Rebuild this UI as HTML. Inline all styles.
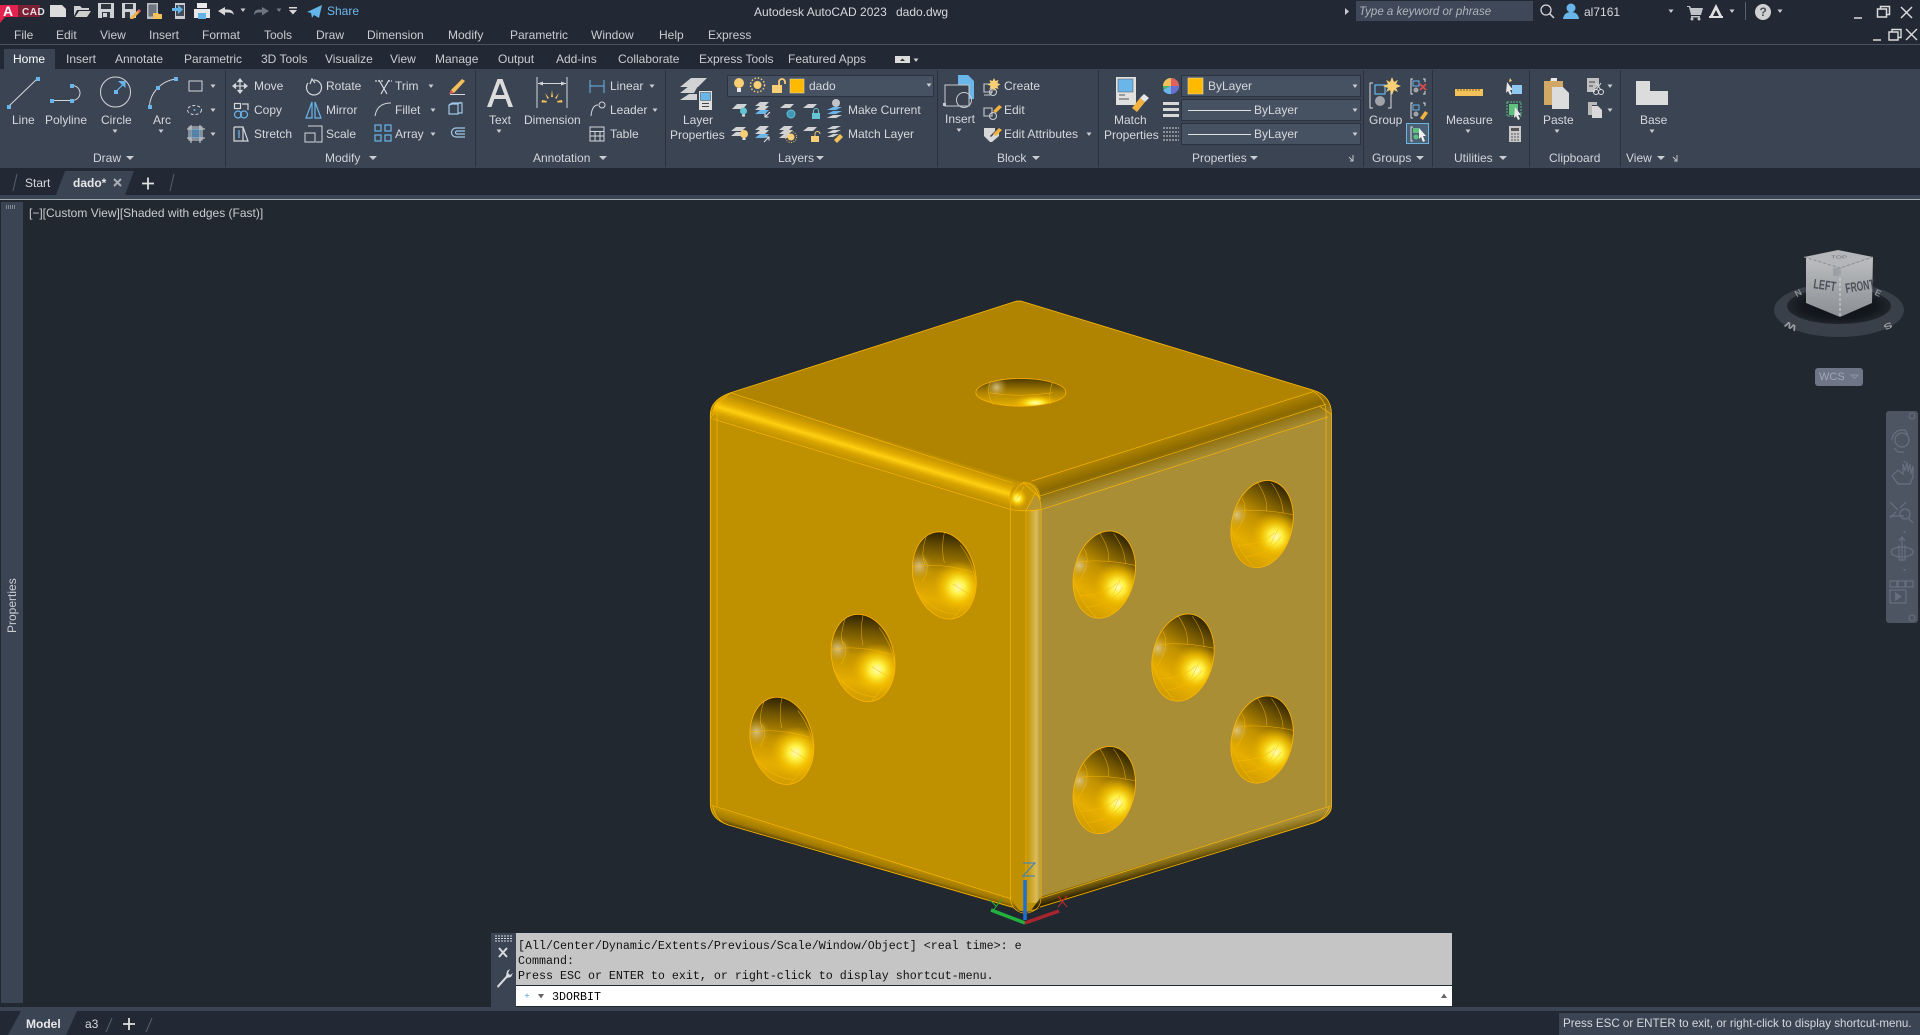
<!DOCTYPE html>
<html lang="en">
<head>
<meta charset="utf-8">
<title>Autodesk AutoCAD 2023 dado.dwg</title>
<style>
html,body{margin:0;padding:0;background:#212830}
body{position:relative;width:1920px;height:1035px;overflow:hidden;font:12px/16px "Liberation Sans",sans-serif;color:#d6d9dd}
.b{position:absolute}
.t{position:absolute;white-space:nowrap;line-height:16px;height:16px}
.m{color:#c9cdd2}
.p{color:#d2d5da}
svg.o{position:absolute;left:0;top:0}
.mono{position:absolute;font:11.67px/15px "Liberation Mono",monospace;white-space:pre;color:#111}
</style>
</head>
<body>
<!-- chrome backgrounds -->
<div class="b" style="left:0;top:0;width:1920px;height:195px;background:#222934"></div>
<div class="b" style="left:0;top:44px;width:1920px;height:1px;background:#4a525d"></div>
<div class="b" style="left:4px;top:49px;width:51px;height:20px;background:#3b4453"></div>
<div class="b" style="left:0;top:69px;width:1920px;height:99px;background:#3b4453"></div>
<div class="b" style="left:0;top:195px;width:1920px;height:4px;background:#3b4453"></div>
<div class="b" style="left:0;top:199px;width:1920px;height:1px;background:#a5abb3"></div>
<div class="b" style="left:1px;top:202px;width:22px;height:801px;background:#3b4453"></div>
<div class="b" style="left:0;top:1007px;width:1920px;height:4px;background:#3b4453"></div>
<div class="b" style="left:0;top:1011px;width:1920px;height:24px;background:#222934"></div>
<div class="b" style="left:1559px;top:1013px;width:361px;height:22px;background:#3b4453"></div>
<!-- search box -->
<div class="b" style="left:1356px;top:1px;width:177px;height:20px;background:#3f4858"></div>
<!-- ribbon dropdowns -->
<div class="b" style="left:727px;top:75px;width:207px;height:22px;background:#465162;border-radius:1px;box-shadow:inset 0 0 0 1px #2c333e"></div>
<div class="b" style="left:1181px;top:75px;width:180px;height:22px;background:#465162;box-shadow:inset 0 0 0 1px #2c333e"></div>
<div class="b" style="left:1181px;top:99px;width:180px;height:22px;background:#465162;box-shadow:inset 0 0 0 1px #2c333e"></div>
<div class="b" style="left:1181px;top:123px;width:180px;height:22px;background:#465162;box-shadow:inset 0 0 0 1px #2c333e"></div>
<div class="b" style="left:1406px;top:123px;width:23px;height:21px;background:#4a6075;box-shadow:inset 0 0 0 1px #6fb3e2"></div>
<!-- command line -->
<div class="b" style="left:491px;top:933px;width:25px;height:74px;background:#3b4453"></div>
<div class="b" style="left:516px;top:933px;width:936px;height:52px;background:#c5c5c5"></div>
<div class="b" style="left:516px;top:986px;width:936px;height:20px;background:#fff"></div>

<svg class="o" width="1920" height="1035" viewBox="0 0 1920 1035" xmlns="http://www.w3.org/2000/svg">
<defs>
<path id="tri" d="M-2.500-1.500H2.500L0 2z" fill="#c9cdd2"/>
<path id="tri2" d="M-4-2H4L0 2z" fill="#c9cdd2"/>
<linearGradient id="gTL" gradientUnits="userSpaceOnUse" x1="470" y1="375" x2="450" y2="442">
<stop offset="0" stop-color="#b48700"/><stop offset=".35" stop-color="#e0aa00"/><stop offset=".55" stop-color="#ffcf10"/><stop offset=".75" stop-color="#d8a400"/><stop offset="1" stop-color="#bf9000"/></linearGradient>
<linearGradient id="gTR" gradientUnits="userSpaceOnUse" x1="1180" y1="366" x2="1202" y2="435">
<stop offset="0" stop-color="#b08400"/><stop offset=".45" stop-color="#8c6a00"/><stop offset=".7" stop-color="#977a1c"/><stop offset="1" stop-color="#a98e36"/></linearGradient>
<linearGradient id="gBL" gradientUnits="userSpaceOnUse" x1="430" y1="1358" x2="420" y2="1392">
<stop offset="0" stop-color="#bf9000"/><stop offset=".5" stop-color="#a07800"/><stop offset="1" stop-color="#302400"/></linearGradient>
<linearGradient id="gBR" gradientUnits="userSpaceOnUse" x1="1180" y1="1358" x2="1190" y2="1395">
<stop offset="0" stop-color="#a98e36"/><stop offset=".5" stop-color="#80660f"/><stop offset="1" stop-color="#302400"/></linearGradient>
<linearGradient id="gV" gradientUnits="userSpaceOnUse" x1="785" y1="0" x2="860" y2="0">
<stop offset="0" stop-color="#bf9000"/><stop offset=".5" stop-color="#bf9000"/><stop offset=".82" stop-color="#dcbc58"/><stop offset="1" stop-color="#a98e36"/></linearGradient>
<linearGradient id="gD" x1=".62" y1="0" x2=".38" y2="1">
<stop offset="0" stop-color="#2a1f00"/><stop offset=".2" stop-color="#6e5300"/><stop offset=".48" stop-color="#c39300"/><stop offset=".78" stop-color="#e6ae00"/><stop offset="1" stop-color="#cd9b00"/></linearGradient>
<linearGradient id="gDT" x1=".5" y1="0" x2=".5" y2="1">
<stop offset="0" stop-color="#4d3a00"/><stop offset=".5" stop-color="#ad8300"/><stop offset="1" stop-color="#e8b000"/></linearGradient>
<radialGradient id="gH"><stop offset="0" stop-color="#fffcc0"/><stop offset=".28" stop-color="#fff040"/><stop offset=".6" stop-color="#f6c400" stop-opacity=".75"/><stop offset="1" stop-color="#e2aa00" stop-opacity="0"/></radialGradient>
<radialGradient id="gP"><stop offset="0" stop-color="#dcc890" stop-opacity=".9"/><stop offset="1" stop-color="#c09a30" stop-opacity="0"/></radialGradient>
<radialGradient id="gRing"><stop offset="0" stop-color="#0e1115"/><stop offset=".7" stop-color="#14181d"/><stop offset="1" stop-color="#20262d"/></radialGradient>
<linearGradient id="gCube" x1="0" y1="0" x2="0" y2="1"><stop offset="0" stop-color="#bcbec1"/><stop offset="1" stop-color="#8b8e92"/></linearGradient>
<clipPath id="cL"><ellipse rx="74" ry="105" transform="rotate(-13)"/></clipPath>
<clipPath id="cR"><ellipse rx="72" ry="105" transform="rotate(13)"/></clipPath>
<clipPath id="cT"><ellipse cx="810" cy="267" rx="107" ry="33"/></clipPath>
<g id="dL">
<ellipse rx="74" ry="105" transform="rotate(-13)" fill="url(#gD)"/>
<g clip-path="url(#cL)"><circle cx="-60" cy="-22" r="32" fill="url(#gP)"/><circle cx="33" cy="28" r="62" fill="url(#gH)"/></g>
<path d="M-42-95Q-58-50-45-25M0-102Q-8-65 0-30M-76-20Q-10-32 68-8M-50-40Q-30-25-52 15M38-72Q70-30 76 20M76 20Q50 70 20 103M-70 30Q-30 90 30 92M55 42L20 20" fill="none" stroke="#ffb800" stroke-width="1.200" opacity=".85"/>
<ellipse rx="74" ry="105" transform="rotate(-13)" fill="none" stroke="#ffb400" stroke-width="1.900"/>
</g>
<g id="dR">
<ellipse rx="72" ry="105" transform="rotate(13)" fill="url(#gD)"/>
<g clip-path="url(#cR)"><circle cx="-60" cy="-22" r="30" fill="url(#gP)"/><circle cx="32" cy="30" r="60" fill="url(#gH)"/></g>
<path d="M-48-62Q-28-30-62 20M-12-100Q15-60 10-32M22-98Q50-60 50-25M-64-30Q0-38 74-22M-74 10Q-50 75-20 100M-60 50Q0 50 30 20M-42 78Q20 70 45 30M38 12L20 48" fill="none" stroke="#ffb800" stroke-width="1.200" opacity=".85"/>
<ellipse rx="72" ry="105" transform="rotate(13)" fill="none" stroke="#ffb400" stroke-width="1.900"/>
</g>
</defs>

<!-- DICE -->
<g transform="translate(680 280) scale(.42088)">
<path d="M800 50H810L1505 262Q1548 275 1548 320V1250Q1548 1275 1505 1290L855 1492Q825 1510 790 1492L115 1295Q72 1280 72 1245V320Q72 285 120 268Z" fill="#bf9000"/>
<path d="M120 268L800 50H810L1505 262L820 482Z" fill="#b08400"/>
<path d="M120 268L820 482L785 545L78 330Q72 285 120 268Z" fill="url(#gTL)"/>
<path d="M820 482L1505 262Q1548 275 1548 325L858 545Z" fill="url(#gTR)"/>
<path d="M858 545L1548 325V1250L858 1465Z" fill="#a98e36"/>
<path d="M785 545H860V1480H785Z" fill="url(#gV)"/>
<path d="M74 1248L785 1470L805 1497L790 1492L115 1295Q80 1285 74 1248Z" fill="url(#gBL)"/>
<path d="M858 1465L1548 1250Q1545 1280 1505 1290L855 1492L835 1497Z" fill="url(#gBR)"/>
<circle cx="820" cy="515" r="36" fill="#c69600"/>
<path d="M840 510A20 30 0 0 1 858 545L822 548Z" fill="#b8962f"/>
<circle cx="802" cy="519" r="24" fill="url(#gH)"/>
<!-- wire -->
<g fill="none" stroke="#ffb800" stroke-width="1.500">
<path d="M72 1245V320Q72 285 120 268L800 50H810L1505 262Q1548 275 1548 320V1250Q1548 1275 1505 1290L855 1490M790 1490L115 1295Q72 1280 72 1245" stroke-width="1.900"/>
<path d="M120 268L790 482M78 330L785 545M835 478L1505 265M850 515L1535 295M860 545L1540 325"/>
<path d="M88 305V1250M1535 315V1250M785 545V1470M822 548V1490M858 545V1470"/>
<path d="M75 1248L785 1470M860 1468L1545 1250"/>
<path d="M785 545A38 66 0 0 1 820 482A38 66 0 0 1 858 545Q822 552 785 545M800 520L818 490M822 548L845 505M815 480L858 520"/>
<path d="M785 1465Q785 1500 820 1505Q858 1500 858 1465M822 1470V1502"/>
<path d="M72 320Q85 295 120 268M88 300L72 330M1505 265Q1535 285 1535 315M1548 320L1520 300M78 1250Q85 1285 115 1295M1505 1290Q1535 1280 1543 1250"/>
</g>
<!-- top dimple -->
<ellipse cx="810" cy="267" rx="107" ry="33" fill="url(#gDT)"/>
<g clip-path="url(#cT)"><circle cx="752" cy="255" r="26" fill="url(#gP)"/><ellipse cx="845" cy="292" rx="55" ry="20" fill="url(#gH)"/></g>
<ellipse cx="810" cy="267" rx="107" ry="33" fill="none" stroke="#ffb400" stroke-width="1.700"/>
<path d="M738 240Q725 270 745 297M885 243Q875 270 880 296M735 268Q800 280 885 268" fill="none" stroke="#ffb800" stroke-width="1.100"/>
<use href="#dL" x="628" y="702"/>
<use href="#dL" x="435" y="898"/>
<use href="#dL" x="242" y="1095"/>
<use href="#dR" x="1008" y="700"/>
<use href="#dR" x="1195" y="897"/>
<use href="#dR" x="1383" y="580"/>
<use href="#dR" x="1383" y="1092"/>
<use href="#dR" x="1008" y="1212"/>
</g>

<!-- UCS -->
<g>
<path d="M1025 920L1025 880" stroke="#1f6fd0" stroke-width="3.500"/>
<path d="M1025 923L991 910" stroke="#22b13c" stroke-width="3.500"/>
<path d="M1025 923L1059 911" stroke="#a8252e" stroke-width="3.500"/>
<path d="M1023 863H1035L1023 876H1035" fill="none" stroke="#2f7fd8" stroke-width="1"/>
<path d="M990 900L996 906M1002 899L992 912" stroke="#22b13c" stroke-width="1" fill="none"/>
<path d="M1058 896L1067 907M1067 896L1058 907" stroke="#c02a30" stroke-width="1" fill="none"/>
</g>

<!-- panel separators -->
<g stroke="#2b323d" stroke-width="1">
<path d="M225.500 70V167M475.500 70V167M665.500 70V167M937.500 70V167M1098.500 70V167M1363.500 70V167M1432.500 70V167M1529.500 70V167M1620.500 70V167"/>
</g>

<!-- TITLE BAR ICONS -->
<path d="M0 5H18V17H5L0 23Z" fill="#e4224f"/>
<path d="M18 5H40V17H18Z" fill="#7c2035"/>
<path d="M50 5h12l4 4v8H50z" fill="#dcdcdc"/>
<path d="M74 6h6l2 2h7v2H77l-3 6zM75 17l4-6h12l-4 6z" fill="#cfcfcf"/>
<path d="M98 3h16v15H98z" fill="#cfd2d5"/><path d="M101 4h10v5h-10zM102 12h8v6h-8z" fill="#30363f"/><path d="M103 13h4v4h-4z" fill="#d0d0d0"/>
<path d="M122 3h14v15h-14z" fill="#cfd2d5"/><path d="M125 4h8v5h-8zM125 12h5v6h-5z" fill="#30363f"/><path d="M131 17l7-7 2 2-7 7-3 0z" fill="#f2b23f"/><path d="M137 11l2-2 2 2-2 2z" fill="#e36060"/>
<path d="M147 3h11v16h-11z" fill="#b9bdc1"/><path d="M148.500 4.500h8v12h-8z" fill="#6e7580"/><path d="M153 13h5l1 1h3v5h-9z" fill="#f2c15a"/>
<path d="M175 3h10v16h-10z" fill="#c9ccd0"/><path d="M176 5h8v11h-8z" fill="#444c57"/><path d="M172 8h6V5l5 4.500-5 4.500v-3h-6z" fill="#62b5ea"/>
<path d="M194 9h16v9h-16z" fill="#e8e8e8"/><path d="M197 3h10v5h-10z" fill="#e8e8e8"/><path d="M198 13h8v6h-8z" fill="#63b4e8"/>
<path d="M218 11l7-4v2.500h3q5 0 6 5.500q-2-2.500-6-2.500h-3v3z" fill="#d8d8d8"/>
<use href="#tri" x="243" y="10"/>
<path d="M269 11l-7-4v2.500h-3q-5 0-5 5.500q2-2.500 5-2.500h3v3z" fill="#6e7580"/>
<use href="#tri" x="279" y="10" opacity=".5"/>
<path d="M289 7h8v1.500h-8zM289 10h8l-4 4.500z" fill="#d8d8d8"/>
<path d="M307 12L322 5l-3 13-5-3-2 3-1-5z" fill="#63b4e8"/>

<!-- TITLE RIGHT ICONS -->
<path d="M1345 8l4 3.500-4 3.500z" fill="#c9cdd2"/>
<circle cx="1546" cy="10" r="5" fill="none" stroke="#d6d6d6" stroke-width="1.300"/><path d="M1549.500 13.500L1554 18" stroke="#d6d6d6" stroke-width="1.500"/>
<circle cx="1571" cy="8" r="4.500" fill="#69b4e8"/><path d="M1563 19q1-7 8-7t8 7z" fill="#69b4e8"/>
<use href="#tri" x="1671" y="11"/>
<path d="M1687 6h3l1 2h12l-2 7h-10l-2-8h-2zM1691 16h9v1.500h-9z" fill="#bfc2c6"/><circle cx="1692" cy="19" r="1.500" fill="#bfc2c6"/><circle cx="1699" cy="19" r="1.500" fill="#bfc2c6"/>
<path d="M1716 4l7 14h-3l-4-8-4 8h-3zM1709 16h14v2h-14z" fill="#e0e0e0"/>
<use href="#tri" x="1732" y="11"/>
<path d="M1745.500 2V20" stroke="#5a616c"/>
<circle cx="1763" cy="12" r="8" fill="#d0d0d0"/>
<use href="#tri" x="1780" y="11"/>
<g fill="none" stroke="#dcdcdc" stroke-width="1.500">
<path d="M1854 18h8M1877.500 9h9v8h-9zM1880.500 9V6.500h9v8h-3M1901 7l11 11M1912 7l-11 11" />
<path d="M1873 40h8M1889 32h9v8h-9zM1892 32v-2.500h9v8h-3M1906 29l11 11M1917 29l-11 11" stroke-width="1.400"/>
</g>
<!-- tab mini icon -->
<rect x="895" y="56" width="15" height="7" fill="#dcdcdc"/><path d="M900 61l2.500-2.500L905 61z" fill="#333"/>
<use href="#tri" x="916" y="60"/>

<!-- DRAW -->
<g fill="#6ab5ea">
<path d="M9 106L37 79" stroke="#d4d7db" stroke-width="1" fill="none"/>
<rect x="7" y="105" width="4" height="4"/><rect x="36" y="77" width="4" height="4"/>
<path d="M52 100.500H72A8 7.500 0 0 0 72 85.500" stroke="#d4d7db" stroke-width="1" fill="none"/>
<rect x="50" y="99" width="4" height="4"/><rect x="70" y="99" width="4" height="4"/><rect x="70" y="84" width="4" height="4"/>
<circle cx="115.500" cy="92" r="15" fill="none" stroke="#d4d7db" stroke-width="1"/>
<path d="M115.500 92l8-8" stroke="#6ab5ea" stroke-width="1.200"/><path d="M118 81h7.500v7z"/><rect x="114" y="90" width="4" height="4"/>
<path d="M149.500 106C150 94 160 81 176 79" fill="none" stroke="#d4d7db" stroke-width="1"/>
<rect x="148" y="105" width="4" height="4"/><rect x="156" y="86" width="4" height="4"/><rect x="174" y="77" width="4" height="4"/>
</g>
<use href="#tri" x="115" y="131"/><use href="#tri" x="161" y="131"/>
<g fill="none" stroke="#d4d7db" stroke-width="1">
<rect x="189" y="81" width="13" height="10"/>
<ellipse cx="194.500" cy="110" rx="7" ry="4.500" stroke-dasharray="3 2"/>
<rect x="189" y="127" width="13" height="13"/><path d="M187 129h18M187 138h18M191 125v18M200 125v18"/>
</g>
<rect x="191" y="129" width="9" height="9" fill="#6ab5ea" opacity=".55"/>
<circle cx="194.500" cy="110" r="1" fill="#6ab5ea"/>
<use href="#tri" x="213" y="86"/><use href="#tri" x="213" y="110"/><use href="#tri" x="213" y="134"/>
<use href="#tri2" x="130" y="158"/>

<!-- MODIFY -->
<g fill="none" stroke="#d4d7db" stroke-width="1.200">
<path d="M240 79v14M233 86h14M240 79l-2 2.500h4zM240 93l-2-2.500h4zM233 86l2.500-2v4zM247 86l-2.500-2v4z"/>
<rect x="234.500" y="103.500" width="6" height="5"/><path d="M242 104h6v6"/>
<circle cx="238" cy="114.500" r="3.500" stroke="#6ab5ea"/><circle cx="244" cy="114.500" r="3.500" stroke="#6ab5ea"/>
<path d="M234 127h9v14M243 127l5 14h-14v-14"/><path d="M239 130v8" stroke="#6ab5ea"/>
<path d="M314 80a7.500 7.500 0 1 1-6 3M310 84l2-5 3 4" />
<path d="M312 102v16l-6 0zM315 102v16l6 0z" stroke="#6ab5ea"/>
<path d="M308 126h14v16h-6M305 133h10v9h-10z" stroke-width="1"/>
<path d="M375 81h8M388 81h4" stroke-dasharray="2 1"/><path d="M379 80l8 14M389 80l-8 14"/>
<path d="M375 116Q377 103 391 103" stroke-width="1"/>
<rect x="375" y="125" width="6" height="6" stroke="#6ab5ea"/><rect x="385" y="125" width="6" height="6" stroke="#6ab5ea"/><rect x="375" y="135" width="6" height="6" stroke="#6ab5ea"/><rect x="385" y="135" width="6" height="6" stroke="#6ab5ea"/>
<path d="M449 105v9h9v-10h-6zM452 103h10v10h-4M449 105l3-2M458 104l3-2" stroke="#9fc8e6"/>
<path d="M465 128h-9a4.500 4.500 0 0 0 0 9h9M465 131h-8a1.500 1.500 0 0 0 0 3h8" stroke="#9fc8e6"/>
</g>
<path d="M451 90L462 79l3 2-11 12z" fill="#f2c15a"/><path d="M449 94l2-4 3 3z" fill="#e36060"/><path d="M450 94.500h15" stroke="#d4d7db"/>
<use href="#tri" x="431" y="86"/><use href="#tri" x="433" y="110"/><use href="#tri" x="433" y="134"/>
<use href="#tri2" x="373" y="158"/>

<!-- ANNOTATION -->
<path fill-rule="evenodd" d="M487 107L497.500 79h5L513 107h-4.500l-2.800-8h-11.400l-2.800 8zM495.500 95h9L500 83z" fill="#dcdcdc"/>
<use href="#tri" x="499" y="131"/>
<g fill="none" stroke="#d4d7db" stroke-width="1">
<path d="M537 77V108M567 77V108M538 83.500H566"/>
<path d="M590 80V93M604 80V93M590 86H604" stroke="#6ab5ea"/>
<path d="M591 116Q592 105 598 105" /><circle cx="602" cy="105" r="3" />
<rect x="590" y="127" width="14" height="14"/><path d="M590 131.500h14M590 136h14M595 131.500V141M600 131.500V141"/>
</g>
<path d="M538 83.500l5-2v4zM566 83.500l-5-2v4z" fill="#d4d7db"/>
<path d="M552 90l1 7h-2zM545 93l4 5-1.500 1zM559 93l-4 5 1.500 1zM542 100l5 1-.5 1.500-5 0zM562 100l-5 1 .5 1.500 5 0z" fill="#f2c15a"/>
<use href="#tri" x="652" y="86"/><use href="#tri" x="655" y="110"/>
<use href="#tri2" x="603" y="158"/>

<!-- LAYERS -->
<g fill="#d0d2d4">
<path d="M680 87l11-9h16l-9 9zM680 93l9-7h9l-4 7zM680 100l9-6h8v6z"/>
</g>
<rect x="699" y="91" width="13" height="19" fill="#e0e0e0"/><rect x="700.500" y="92.500" width="10" height="8" fill="#6ab5ea" stroke="#444" stroke-width=".5"/>
<path d="M702 103.500h7M702 106.500h7" stroke="#444" stroke-width="1"/>
<circle cx="739" cy="83" r="5" fill="#f9cf75"/><rect x="737" y="88" width="4" height="4" fill="#e8e8e8"/>
<circle cx="757.500" cy="85" r="4" fill="#f9cf75"/><circle cx="757.500" cy="85" r="7" fill="none" stroke="#f9cf75" stroke-width="1.400" stroke-dasharray="1.500 1.800"/>
<rect x="772" y="85" width="10" height="8" fill="#f9cf75"/><path d="M779 85v-3a3 3 0 0 1 6 0v2" fill="none" stroke="#f9cf75" stroke-width="1.800"/>
<rect x="790" y="79" width="14" height="14" fill="#ffb900" stroke="#e0d6a8" stroke-width=".6"/>
<use href="#tri" x="929" y="85"/>
<!-- layer row 2 -->
<path d="M732 109l5-5h10l-4 5z" fill="#d0d2d4"/><circle cx="743.500" cy="111" r="3.500" fill="#64c4d4"/><rect x="742" y="114.500" width="3" height="2" fill="#e0e0e0"/>
<path d="M755 106l5-4h9l-4 4zM755 110l5-4h9l-4 4z" fill="#d0d2d4"/><path d="M755 114l5-4h9l-4 4z" fill="#6ab5ea"/><path d="M770 112l-5 5m0-3.500v3.500h3.500" stroke="#e8e8e8" fill="none"/>
<path d="M780 108l5-4h9l-4 4z" fill="#d0d2d4"/><circle cx="791" cy="114" r="4" fill="#3f98b5" stroke="#64c4d4"/>
<path d="M803 108l5-4h9l-4 4z" fill="#d0d2d4"/><rect x="812" y="113" width="8" height="6" fill="#64c4d4"/><path d="M813.500 113v-2a2.500 2.500 0 0 1 5 0v2" fill="none" stroke="#64c4d4"/>
<circle cx="836" cy="103" r="4" fill="#c0c4c8"/><path d="M827 110l6-3h9l-6 3z" fill="#6ab5ea"/><path d="M827 114l6-3h9l-6 3z" fill="#6ab5ea"/><path d="M827 118l6-3h9l-6 3z" fill="#d0d2d4"/>
<!-- layer row 3 -->
<path d="M731 131l5-4h10l-4 4zM731 136l5-4h8l-4 4z" fill="#d0d2d4"/><circle cx="744" cy="134" r="4" fill="#f9cf75"/><rect x="742.500" y="138" width="3" height="2" fill="#e0e0e0"/>
<path d="M755 130l5-4h9l-4 4zM755 134l5-4h9l-4 4z" fill="#d0d2d4"/><path d="M755 138l5-4h9l-4 4z" fill="#6ab5ea"/><path d="M764 142l5-5m-3.500 0h3.500v3.500" stroke="#e8e8e8" fill="none"/>
<path d="M779 130l5-4h9l-4 4zM779 134l5-4h9l-4 4zM779 138l5-4h6l-3 4z" fill="#d0d2d4"/><circle cx="791" cy="137" r="3.500" fill="#f9cf75"/><circle cx="791" cy="137" r="5.500" fill="none" stroke="#f9cf75" stroke-dasharray="1 1.500"/>
<path d="M803 131l5-4h9l-4 4z" fill="#d0d2d4"/><rect x="811" y="136" width="8" height="6" fill="#f9cf75"/><path d="M815 136v-2a2.500 2.500 0 0 1 5 0" fill="none" stroke="#f9cf75"/>
<path d="M827 129l6-3h8l-6 3zM827 133l6-3h8l-6 3zM827 137l6-3h6l-6 3z" fill="#d0d2d4"/><path d="M834 140l6-6 3 3-6 6z" fill="#f2c15a"/>
<use href="#tri2" x="820" y="158"/>

<!-- BLOCK -->
<path d="M958 75h10l6 6v18h-16z" fill="#6ab5ea"/>
<rect x="945" y="85" width="24" height="21" fill="#39414f" stroke="#c8ccd0"/>
<circle cx="964" cy="100" r="7.500" fill="none" stroke="#c8ccd0"/>
<rect x="943" y="103" width="3" height="3" fill="#c8ccd0"/>
<use href="#tri" x="959" y="130"/>
<g fill="none" stroke="#c8ccd0" stroke-width="1.100">
<path d="M984 84h8v8h-8zM992 82v3M992 92l-2 3h-6"/><circle cx="993" cy="92" r="3.500"/>
<path d="M984 108h8v8h-8z"/><circle cx="993" cy="116" r="3.500"/>
</g>
<path d="M994 79l1.500 3 3-1-1 3 3 1.500-3 1.500 1 3-3-1-1.500 3-1.500-3-3 1 1-3-3-1.500 3-1.500-1-3 3 1z" fill="#f9cf75" transform="translate(0 -1)"/>
<path d="M993 111l6-6 3 2-6 6z" fill="#f2b23f"/>
<path d="M984 128h11v3l-5 5 1 1 6-6 2 1v4l-7 6h-2l-6-6z" fill="#d8d8d8"/><path d="M993 134l6-6 3 2-6 6z" fill="#f2b23f"/>
<use href="#tri" x="1089" y="134"/>
<use href="#tri2" x="1036" y="158"/>

<!-- PROPERTIES -->
<rect x="1116" y="77" width="20" height="28" fill="#e0e0e0"/><rect x="1118" y="79" width="15" height="13" fill="#6ab5ea" stroke="#555" stroke-width=".5"/>
<path d="M1119 95h6M1119 99h10" stroke="#555"/>
<path d="M1132 108l8-10 5 4-8 10z" fill="#f2b23f"/><path d="M1140 98l4-4 5 4-4 4z" fill="#e8e8e8"/>
<circle cx="1171" cy="86" r="8" fill="#4fb06a"/><path d="M1171 78a8 8 0 0 1 8 8h-8z" fill="#e36060"/><path d="M1171 86h8a8 8 0 0 1-8 8z" fill="#6a6fd0"/><path d="M1171 86v8a8 8 0 0 1-8-4z" fill="#6ab5ea"/><path d="M1163 86a8 8 0 0 1 8-8v8z" fill="#f2c15a"/>
<path d="M1163 102h16v3h-16zM1163 108h16v3h-16zM1163 114h16v3h-16z" fill="#d8d8d8"/>
<path d="M1163 128h16M1163 132h16M1163 136h16M1163 140h16" stroke="#d8d8d8" stroke-dasharray="2 1"/>
<rect x="1188" y="78" width="15" height="16" fill="#ffb900" stroke="#e6dcb0" stroke-width=".6"/>
<path d="M1188 110.500h63M1188 134.500h63" stroke="#e0e0e0"/>
<use href="#tri" x="1355" y="86"/><use href="#tri" x="1355" y="110"/><use href="#tri" x="1355" y="134"/>
<use href="#tri2" x="1254" y="158"/>
<path d="M1353 155v6h-3M1353 161l-4-4" stroke="#c0c4c8" fill="none"/>

<!-- GROUPS -->
<path d="M1373 83h-3v25h3M1388 83h3v25h-3" fill="none" stroke="#dcdcdc"/>
<rect x="1375" y="85" width="10" height="9" fill="none" stroke="#6ab5ea" stroke-width="1.200"/><circle cx="1380" cy="101" r="5" fill="#a0a4a8"/>
<path d="M1392 77l2 5 4-2-2 4 5 2-5 2 2 4-4-2-2 5-2-5-4 2 2-4-5-2 5-2-2-4 4 2z" fill="#f9cf75"/>
<g fill="none" stroke="#dcdcdc">
<path d="M1413 79h-2v15h2M1423 79h2v3M1423 94h2v-3"/>
<path d="M1413 103h-2v15h2M1423 103h2v3"/>
<path d="M1413 127h-2v14h2"/>
</g>
<rect x="1413" y="81" width="6" height="5" fill="none" stroke="#6ab5ea"/><circle cx="1416" cy="90" r="2.500" fill="#a0a4a8"/>
<path d="M1420 84l6 6m0-6l-6 6" stroke="#e04a4a" stroke-width="1.600"/>
<rect x="1413" y="105" width="6" height="5" fill="none" stroke="#6ab5ea"/><circle cx="1416" cy="114" r="2.500" fill="#a0a4a8"/>
<path d="M1420 118l5-7 3 2-5 7z" fill="#f2b23f"/>
<rect x="1413" y="128" width="6" height="5" fill="#5fc080"/><circle cx="1416" cy="137" r="2.500" fill="#5fc080"/>
<path d="M1419 128l7 8h-3l2 5-2 1-2-5-2 2z" fill="#f0f0f0"/>
<use href="#tri2" x="1420" y="158"/>

<!-- UTILITIES -->
<rect x="1455" y="89" width="28" height="7" fill="#f2c15a"/>
<path d="M1458 89v2M1461 89v2M1464 89v2M1467 89v2M1470 89v2M1473 89v2M1476 89v2M1479 89v2" stroke="#7a6020"/>
<use href="#tri" x="1468" y="131"/>
<path d="M1507 82l6 8h-3l2 4-2 1-2-4-2 2z" fill="#e8e8e8"/><path d="M1510 78l2 3-3 1z" fill="#f9cf75"/><rect x="1512" y="85" width="10" height="9" fill="#8fc8ee"/>
<rect x="1507" y="102" width="14" height="14" fill="none" stroke="#5fc080" stroke-dasharray="2 1"/><rect x="1509" y="104" width="9" height="11" fill="#5fc080"/><path d="M1515 107l6 8h-3l2 4-2 1-2-4-2 2z" fill="#e8e8e8"/>
<rect x="1509" y="126" width="12" height="16" fill="#c8c8c8"/><rect x="1511" y="128" width="8" height="3" fill="#555"/><path d="M1511 134h8M1511 137h8M1511 140h8" stroke="#555" stroke-dasharray="2 1"/>
<use href="#tri2" x="1503" y="158"/>

<!-- CLIPBOARD -->
<path d="M1544 81h6l1-3h5l1 3h6v24h-19z" fill="#d1a866"/><rect x="1551" y="78" width="6" height="3" fill="#e8e8e8"/>
<path d="M1552 87h11l6 6v16h-17z" fill="#dcdcdc"/>
<use href="#tri" x="1557" y="131"/>
<path d="M1587 78h12v7l-4 4v3h-8z" fill="#c0c0c0"/><path d="M1589 82h6M1589 86h4" stroke="#444"/>
<circle cx="1596" cy="92" r="2.500" fill="none" stroke="#dcdcdc"/><circle cx="1601" cy="92" r="2.500" fill="none" stroke="#dcdcdc"/><path d="M1596 90l5-7M1601 90l-5-7" stroke="#dcdcdc"/>
<path d="M1588 102h9v3h-5v10h-4z" fill="#b8b8b8"/><path d="M1592 106h6l4 4v8h-10z" fill="#d8d8d8"/>
<use href="#tri" x="1610" y="86"/><use href="#tri" x="1610" y="110"/>

<!-- VIEW -->
<path d="M1636 81h14v10h18v14h-32z" fill="#dcdcdc"/>
<use href="#tri" x="1652" y="131"/>
<use href="#tri2" x="1661" y="158"/>
<path d="M1677 155v6h-3M1677 161l-4-4" stroke="#c0c4c8" fill="none"/>

<!-- doc tabs -->
<path d="M56 195L65 171H134L125 195Z" fill="#3b4453"/>
<path d="M13 191l4-17M170 191l4-17" stroke="#55606e"/>
<path d="M114 179l7 7m0-7l-7 7" stroke="#a8adb3" stroke-width="2"/>
<path d="M142 183.500h12M148 177.500v12" stroke="#e0e0e0" stroke-width="1.800"/>
<!-- status tabs -->
<path d="M8 1035L21 1011H77L66 1035Z" fill="#3b4453"/>
<path d="M106 1032l6-14M146 1032l6-14" stroke="#55606e"/>
<path d="M123 1024h12M129 1018v12" stroke="#e0e0e0" stroke-width="1.800"/>
<!-- sidebar dots -->
<path d="M6 206h9M6 208h9" stroke="#c8ccd0" stroke-dasharray="1 1"/>

<!-- command handle -->
<path d="M495 936h18M495 938.500h18M495 941h18" stroke="#d8dbdf" stroke-dasharray="2 1"/>
<path d="M499 948l8 9m0-9l-8 9" stroke="#d8dbdf" stroke-width="2"/>
<path d="M497 986l9-10 1-5 3-2-2 4 2 2 3-2-2 4-4 1-9 10z" fill="#d8dbdf"/>
<path d="M525 995.500h4M527 993.500v4" stroke="#7fb6dc"/>
<path d="M538 994h6l-3 4.500z" fill="#666"/>
<path d="M1441 998h6l-3-4.500z" fill="#666"/>

<!-- ViewCube -->
<ellipse cx="1839" cy="310" rx="65" ry="27" fill="#3a4049"/>
<ellipse cx="1839" cy="306" rx="52" ry="18" fill="url(#gRing)"/>
<path d="M1806 257L1840 268L1840 317L1806 303Z" fill="url(#gCube)"/>
<path d="M1873 257L1840 268L1840 317L1872 303Z" fill="url(#gCube)"/>
<path d="M1804 257L1838 250L1873 257L1840 268Z" fill="#b4b6b9"/>
<path d="M1840 268V317" stroke="#d4d6d8" stroke-dasharray="3 2"/>
<path d="M1804 257L1840 268L1873 257" stroke="#8a8d91" fill="none" stroke-dasharray="3 2"/>
<rect x="1833" y="268" width="8" height="8" fill="#8a8e92" opacity=".5"/>

<!-- WCS -->
<rect x="1815" y="368" width="48" height="18" rx="3" fill="#6e7586"/>
<path d="M1851 375h7l-3.500 3.500z" fill="none" stroke="#8a91a0"/>

<!-- Nav bar -->
<rect x="1886" y="411" width="32" height="212" rx="3" fill="#4d5563"/>
<g fill="none" stroke="#687080" stroke-width="1.200">
<circle cx="1902" cy="440" r="7"/><path d="M1892 440a10 10 0 0 1 10-10h3l3 5"/><path d="M1894 448l4 4h6"/>
<path d="M1892 476l6 8h12l3-7v-11l-2 8-1-10-2 8-1-10-2 9-2-7v10l-5-4z"/>
<path d="M1890 502l8 8m6 6l-14 0M1896 512l-6 6M1906 502l-6 6"/><circle cx="1905" cy="514" r="5"/><path d="M1908 518l5 5"/>
<path d="M1902 538v22M1899 541l3-4 3 4M1899 545v15h6v-15"/><ellipse cx="1902" cy="552" rx="11" ry="5"/>
<rect x="1890" y="581" width="7" height="6"/><rect x="1898" y="581" width="7" height="6"/><rect x="1906" y="581" width="7" height="6"/><rect x="1890" y="590" width="16" height="13"/>
</g>
<path d="M1895 592l7 4.500-7 4.500z" fill="#687080"/>
<path d="M1903 461h3l-1.500 2zM1903 531h3l-1.500 2zM1903 569h3l-1.500 2z" fill="#687080"/>
<circle cx="1912" cy="416" r="3" fill="none" stroke="#687080"/><circle cx="1912" cy="618" r="3" fill="none" stroke="#687080"/>
</svg>

<!-- Cube text -->
<span class="t" style="left:1812px;top:279px;font-size:10px;color:#4c5058;transform:rotate(8deg) scale(.9,1.35);font-weight:bold">LEFT</span>
<span class="t" style="left:1843px;top:280px;font-size:10px;color:#4c5058;transform:rotate(-9deg) scale(.85,1.35);font-weight:bold">FRONT</span>
<span class="t" style="left:1832px;top:250px;font-size:7px;color:#6c7076;transform:scale(1.1,.6)">TOP</span>
<span class="t" style="left:1785px;top:318px;font-size:12px;color:#9ca0a6;font-weight:bold;transform:rotate(-155deg) scale(1.1,.7)">W</span>
<span class="t" style="left:1884px;top:318px;font-size:12px;color:#9ca0a6;font-weight:bold;transform:rotate(155deg) scale(1.1,.7)">S</span>
<span class="t" style="left:1795px;top:285px;font-size:9px;color:#8d9197;font-weight:bold;transform:rotate(-30deg)">N</span>
<span class="t" style="left:1875px;top:285px;font-size:9px;color:#8d9197;font-weight:bold;transform:rotate(25deg)">E</span>
<span class="t" style="left:1819px;top:369px;font-size:11px;color:#a0a6b4">WCS</span>

<!-- Title bar text -->
<span class="t" style="left:22px;top:5px;font-size:10px;font-weight:bold;color:#e6dfe1;letter-spacing:.5px">CAD</span>
<span class="t" style="left:3px;top:3px;font-size:14px;font-weight:bold;color:#fff">A</span>
<span class="t" style="left:327px;top:3px;color:#6fb8ea">Share</span>
<span class="t" style="left:754px;top:4px;color:#d6d9dd">Autodesk AutoCAD 2023</span>
<span class="t" style="left:896px;top:4px;color:#d6d9dd">dado.dwg</span>
<span class="t" style="left:1359px;top:4px;font-style:italic;color:#b0b5bd;font-size:11.500px">Type a keyword or phrase</span>
<span class="t" style="left:1584px;top:4px;color:#d6d9dd">al7161</span>
<span class="t" style="left:1759.500px;top:4px;font-weight:bold;font-size:12px;color:#4a4f57">?</span>

<!-- Menu -->
<span class="t m" style="left:14px;top:27px">File</span>
<span class="t m" style="left:56px;top:27px">Edit</span>
<span class="t m" style="left:100px;top:27px">View</span>
<span class="t m" style="left:149px;top:27px">Insert</span>
<span class="t m" style="left:202px;top:27px">Format</span>
<span class="t m" style="left:264px;top:27px">Tools</span>
<span class="t m" style="left:316px;top:27px">Draw</span>
<span class="t m" style="left:367px;top:27px">Dimension</span>
<span class="t m" style="left:448px;top:27px">Modify</span>
<span class="t m" style="left:510px;top:27px">Parametric</span>
<span class="t m" style="left:591px;top:27px">Window</span>
<span class="t m" style="left:659px;top:27px">Help</span>
<span class="t m" style="left:708px;top:27px">Express</span>

<!-- Ribbon tabs -->
<span class="t" style="left:13px;top:51px;color:#fff">Home</span>
<span class="t m" style="left:66px;top:51px">Insert</span>
<span class="t m" style="left:115px;top:51px">Annotate</span>
<span class="t m" style="left:184px;top:51px">Parametric</span>
<span class="t m" style="left:261px;top:51px">3D Tools</span>
<span class="t m" style="left:325px;top:51px">Visualize</span>
<span class="t m" style="left:390px;top:51px">View</span>
<span class="t m" style="left:435px;top:51px">Manage</span>
<span class="t m" style="left:498px;top:51px">Output</span>
<span class="t m" style="left:556px;top:51px">Add-ins</span>
<span class="t m" style="left:618px;top:51px">Collaborate</span>
<span class="t m" style="left:699px;top:51px">Express Tools</span>
<span class="t m" style="left:788px;top:51px">Featured Apps</span>

<!-- Draw -->
<span class="t" style="left:12px;top:112px">Line</span>
<span class="t" style="left:45px;top:112px">Polyline</span>
<span class="t" style="left:101px;top:112px">Circle</span>
<span class="t" style="left:153px;top:112px">Arc</span>
<span class="t p" style="left:93px;top:150px">Draw</span>
<!-- Modify -->
<span class="t" style="left:254px;top:78px">Move</span>
<span class="t" style="left:254px;top:102px">Copy</span>
<span class="t" style="left:254px;top:126px">Stretch</span>
<span class="t" style="left:326px;top:78px">Rotate</span>
<span class="t" style="left:326px;top:102px">Mirror</span>
<span class="t" style="left:326px;top:126px">Scale</span>
<span class="t" style="left:395px;top:78px">Trim</span>
<span class="t" style="left:395px;top:102px">Fillet</span>
<span class="t" style="left:395px;top:126px">Array</span>
<span class="t p" style="left:325px;top:150px">Modify</span>
<!-- Annotation -->
<span class="t" style="left:489px;top:112px">Text</span>
<span class="t" style="left:524px;top:112px">Dimension</span>
<span class="t" style="left:610px;top:78px">Linear</span>
<span class="t" style="left:610px;top:102px">Leader</span>
<span class="t" style="left:610px;top:126px">Table</span>
<span class="t p" style="left:533px;top:150px">Annotation</span>
<!-- Layers -->
<span class="t" style="left:683px;top:112px">Layer</span>
<span class="t" style="left:670px;top:127px">Properties</span>
<span class="t" style="left:809px;top:78px">dado</span>
<span class="t" style="left:848px;top:102px">Make Current</span>
<span class="t" style="left:848px;top:126px">Match Layer</span>
<span class="t p" style="left:778px;top:150px">Layers</span>
<!-- Block -->
<span class="t" style="left:945px;top:111px">Insert</span>
<span class="t" style="left:1004px;top:78px">Create</span>
<span class="t" style="left:1004px;top:102px">Edit</span>
<span class="t" style="left:1004px;top:126px">Edit Attributes</span>
<span class="t p" style="left:997px;top:150px">Block</span>
<!-- Properties -->
<span class="t" style="left:1114px;top:112px">Match</span>
<span class="t" style="left:1104px;top:127px">Properties</span>
<span class="t" style="left:1208px;top:78px">ByLayer</span>
<span class="t" style="left:1254px;top:102px">ByLayer</span>
<span class="t" style="left:1254px;top:126px">ByLayer</span>
<span class="t p" style="left:1192px;top:150px">Properties</span>
<!-- Groups -->
<span class="t" style="left:1369px;top:112px">Group</span>
<span class="t p" style="left:1372px;top:150px">Groups</span>
<!-- Utilities -->
<span class="t" style="left:1446px;top:112px">Measure</span>
<span class="t p" style="left:1454px;top:150px">Utilities</span>
<!-- Clipboard -->
<span class="t" style="left:1543px;top:112px">Paste</span>
<span class="t p" style="left:1549px;top:150px">Clipboard</span>
<!-- View -->
<span class="t" style="left:1640px;top:112px">Base</span>
<span class="t p" style="left:1626px;top:150px">View</span>

<!-- Doc tabs -->
<span class="t" style="left:25px;top:175px">Start</span>
<span class="t" style="left:73px;top:175px;font-weight:bold;color:#e8e8e8">dado*</span>
<span class="t" style="left:29px;top:205px;color:#c9cdd2">[&minus;][Custom View][Shaded with edges (Fast)]</span>
<span class="t" style="left:3px;top:595px;width:18px;height:18px;line-height:18px;color:#c9cdd2;transform:rotate(-90deg);transform-origin:center;text-indent:-20px">Properties</span>

<!-- Command -->
<span class="mono" style="left:518px;top:939px">[All/Center/Dynamic/Extents/Previous/Scale/Window/Object] &lt;real time&gt;: e</span>
<span class="mono" style="left:518px;top:954px">Command:</span>
<span class="mono" style="left:518px;top:969px">Press ESC or ENTER to exit, or right-click to display shortcut-menu.</span>
<span class="mono" style="left:552px;top:990px;color:#000">3DORBIT</span>

<!-- Status -->
<span class="t" style="left:26px;top:1016px;font-weight:bold;color:#e8e8e8">Model</span>
<span class="t" style="left:85px;top:1016px">a3</span>
<span class="t" style="left:1563px;top:1016px;font-size:11.600px;color:#d6d9dd">Press ESC or ENTER to exit, or right-click to display shortcut-menu.</span>
</body>
</html>
